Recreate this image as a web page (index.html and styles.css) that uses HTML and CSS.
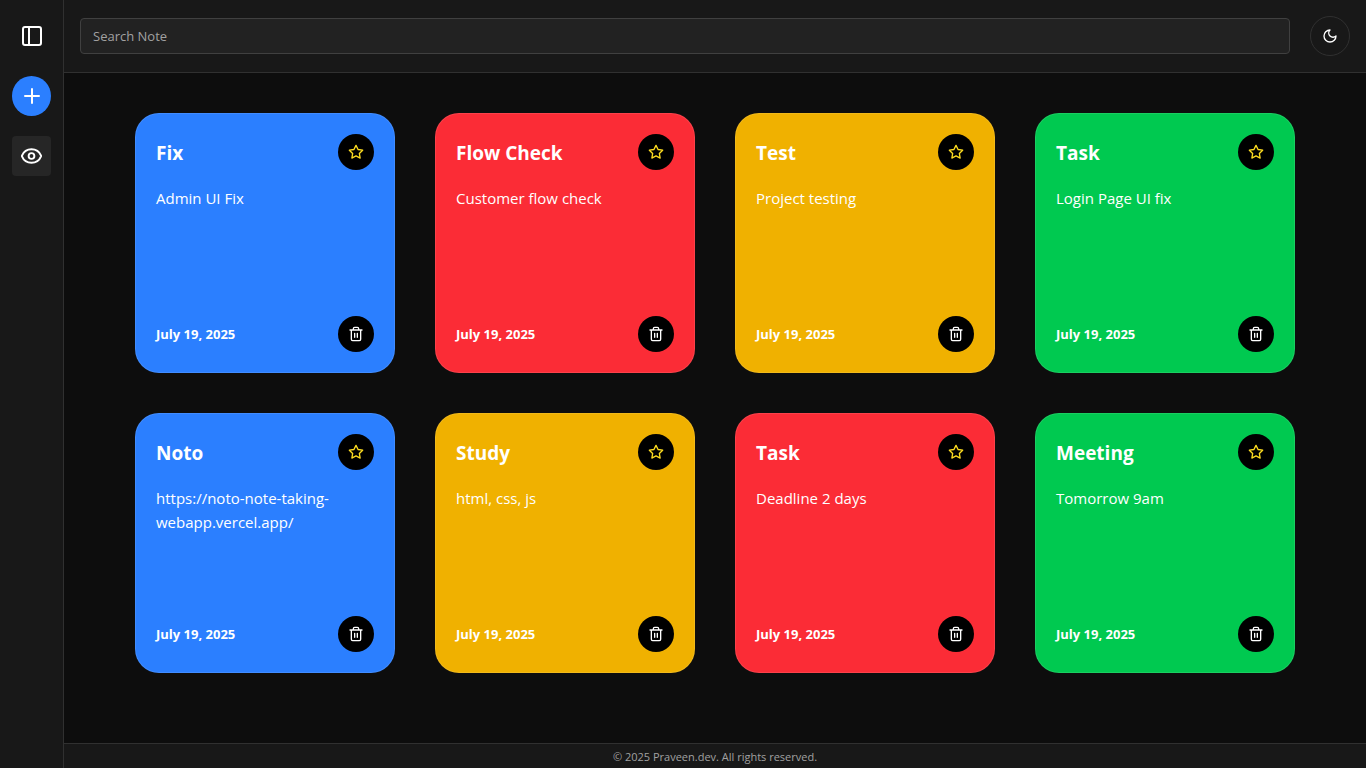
FILE: index.html
```html
<!DOCTYPE html>
<html lang="en">
<head>
<meta charset="utf-8">
<meta name="viewport" content="width=device-width, initial-scale=1">
<title>Noto</title>
<link rel="stylesheet" href="styles.css">
</head>
<body>
<svg class="sprite" aria-hidden="true">
  <symbol id="star" viewBox="0 0 24 24"><path d="M12 2l3.1 6.3 6.9 1-5 4.9 1.200 6.9-6.200-3.200-6.200 3.200 1.200-6.900-5-4.900 6.900-1z"/></symbol>
  <symbol id="trash" viewBox="0 0 24 24"><path d="M3 6h18M19 6v14a2 2 0 0 1-2 2H7a2 2 0 0 1-2-2V6M8 6V4a2 2 0 0 1 2-2h4a2 2 0 0 1 2 2v2M10 11v6M14 11v6"/></symbol>
</svg>
<div class="app">
  <aside class="sidebar">
    <button class="side-btn" type="button" aria-label="Toggle sidebar"><svg class="icon" viewBox="0 0 24 24"><rect x="3" y="3" width="18" height="18" rx="2"/><path d="M9 3v18"/></svg></button>
    <button class="side-btn side-btn-add" type="button" aria-label="Add note"><svg class="icon" viewBox="0 0 24 24"><path d="M5 12h14M12 5v14"/></svg></button>
    <button class="side-btn side-btn-view" type="button" aria-label="View notes"><svg class="icon icon-eye" viewBox="0 0 24 24"><path d="M2.060 12.350a1 1 0 0 1 0-.7 10.750 10.750 0 0 1 19.880 0 1 1 0 0 1 0 .7 10.750 10.750 0 0 1-19.880 0"/><circle cx="12" cy="12" r="3"/></svg></button>
  </aside>
  <div class="page">
    <header class="topbar">
      <input class="search" type="search" placeholder="Search Note" aria-label="Search Note">
      <button class="theme-btn" type="button" aria-label="Toggle theme"><svg class="icon icon-small" viewBox="0 0 24 24"><path d="M12 3a6 6 0 0 0 9 9 9 9 0 1 1-9-9z"/></svg></button>
    </header>
    <main class="notes">
      <article class="note blue">
        <div class="note-row"><h2 class="note-title">Fix</h2><button class="round-btn star" type="button" aria-label="Favourite"><svg class="icon icon-small"><use href="#star"/></svg></button></div>
        <p class="note-text">Admin UI Fix</p>
        <div class="note-row"><time class="note-date" datetime="2025-07-19">July 19, 2025</time><button class="round-btn" type="button" aria-label="Delete"><svg class="icon icon-small"><use href="#trash"/></svg></button></div>
      </article>
      <article class="note red">
        <div class="note-row"><h2 class="note-title">Flow Check</h2><button class="round-btn star" type="button" aria-label="Favourite"><svg class="icon icon-small"><use href="#star"/></svg></button></div>
        <p class="note-text">Customer flow check</p>
        <div class="note-row"><time class="note-date" datetime="2025-07-19">July 19, 2025</time><button class="round-btn" type="button" aria-label="Delete"><svg class="icon icon-small"><use href="#trash"/></svg></button></div>
      </article>
      <article class="note yellow">
        <div class="note-row"><h2 class="note-title">Test</h2><button class="round-btn star" type="button" aria-label="Favourite"><svg class="icon icon-small"><use href="#star"/></svg></button></div>
        <p class="note-text">Project testing</p>
        <div class="note-row"><time class="note-date" datetime="2025-07-19">July 19, 2025</time><button class="round-btn" type="button" aria-label="Delete"><svg class="icon icon-small"><use href="#trash"/></svg></button></div>
      </article>
      <article class="note green">
        <div class="note-row"><h2 class="note-title">Task</h2><button class="round-btn star" type="button" aria-label="Favourite"><svg class="icon icon-small"><use href="#star"/></svg></button></div>
        <p class="note-text">Login Page UI fix</p>
        <div class="note-row"><time class="note-date" datetime="2025-07-19">July 19, 2025</time><button class="round-btn" type="button" aria-label="Delete"><svg class="icon icon-small"><use href="#trash"/></svg></button></div>
      </article>
      <article class="note blue">
        <div class="note-row"><h2 class="note-title">Noto</h2><button class="round-btn star" type="button" aria-label="Favourite"><svg class="icon icon-small"><use href="#star"/></svg></button></div>
        <p class="note-text">https://noto-note-taking-webapp.vercel.app/</p>
        <div class="note-row"><time class="note-date" datetime="2025-07-19">July 19, 2025</time><button class="round-btn" type="button" aria-label="Delete"><svg class="icon icon-small"><use href="#trash"/></svg></button></div>
      </article>
      <article class="note yellow">
        <div class="note-row"><h2 class="note-title">Study</h2><button class="round-btn star" type="button" aria-label="Favourite"><svg class="icon icon-small"><use href="#star"/></svg></button></div>
        <p class="note-text">html, css, js</p>
        <div class="note-row"><time class="note-date" datetime="2025-07-19">July 19, 2025</time><button class="round-btn" type="button" aria-label="Delete"><svg class="icon icon-small"><use href="#trash"/></svg></button></div>
      </article>
      <article class="note red">
        <div class="note-row"><h2 class="note-title">Task</h2><button class="round-btn star" type="button" aria-label="Favourite"><svg class="icon icon-small"><use href="#star"/></svg></button></div>
        <p class="note-text">Deadline 2 days</p>
        <div class="note-row"><time class="note-date" datetime="2025-07-19">July 19, 2025</time><button class="round-btn" type="button" aria-label="Delete"><svg class="icon icon-small"><use href="#trash"/></svg></button></div>
      </article>
      <article class="note green">
        <div class="note-row"><h2 class="note-title">Meeting</h2><button class="round-btn star" type="button" aria-label="Favourite"><svg class="icon icon-small"><use href="#star"/></svg></button></div>
        <p class="note-text">Tomorrow 9am</p>
        <div class="note-row"><time class="note-date" datetime="2025-07-19">July 19, 2025</time><button class="round-btn" type="button" aria-label="Delete"><svg class="icon icon-small"><use href="#trash"/></svg></button></div>
      </article>
    </main>
    <footer class="footer">© 2025 Praveen.dev. All rights reserved.</footer>
  </div>
</div>
</body>
</html>
```
FILE: styles.css
```css
*, *::before, *::after { box-sizing: border-box; }

body {
  margin: 0;
  background: #0d0d0d;
  color: #fff;
  font-family: "Segoe UI", "Open Sans", "Noto Sans", sans-serif;
}

button {
  display: flex;
  align-items: center;
  justify-content: center;
  padding: 0;
  border: 0;
  background: none;
  color: #fff;
  cursor: pointer;
}

.sprite { display: none; }

.icon {
  width: 24px;
  height: 24px;
  fill: none;
  stroke: currentColor;
  stroke-width: 2;
  stroke-linecap: round;
  stroke-linejoin: round;
}
.icon-eye { width: 23px; }
.icon-small { width: 16px; height: 16px; }

.app { display: flex; min-height: 100vh; }

.sidebar {
  display: flex;
  flex-direction: column;
  flex: 0 0 64px;
  gap: 20px;
  padding: 16px 12px;
  background: #181818;
  border-right: 1px solid #303030;
}
.side-btn { height: 40px; border-radius: 4px; }
.side-btn-add { background: #2b7fff; border-radius: 50%; }
.side-btn-view { background: #262626; }

.page {
  display: flex;
  flex-direction: column;
  flex: 1;
  min-width: 0;
}

.topbar {
  display: flex;
  align-items: center;
  gap: 20px;
  padding: 16px;
  background: #181818;
  border-bottom: 1px solid #303030;
}
.search {
  flex: 1;
  min-width: 0;
  height: 36px;
  padding: 0 12px;
  border: 1px solid #404040;
  border-radius: 4px;
  background: #222;
  color: #fff;
  font: inherit;
  font-size: 13px;
}
.search::placeholder { color: #a1a1a1; opacity: 1; }
.theme-btn {
  width: 40px;
  height: 40px;
  border: 1px solid #303030;
  border-radius: 50%;
}

.notes {
  display: grid;
  grid-template-columns: repeat(auto-fill, 260px);
  justify-content: center;
  align-content: start;
  gap: 40px;
  flex: 1;
  padding: 40px;
}
.note {
  display: flex;
  flex-direction: column;
  min-height: 260px;
  padding: 20px;
  border: 1px solid rgb(255 255 255 / 10%);
  border-radius: 24px;
}
.blue { background-color: #2b7fff; }
.red { background-color: #fb2c36; }
.yellow { background-color: #f0b100; }
.green { background-color: #00c950; }

.note-row {
  display: flex;
  align-items: center;
  justify-content: space-between;
}
.note-title {
  margin: 0;
  padding-top: 2px;
  font-size: 19px;
  line-height: 28px;
  font-weight: 700;
}
.note-text {
  flex: 1;
  margin: 16px 0;
  font-size: 15px;
  line-height: 24px;
}
.note-date { font-size: 13px; line-height: 20px; font-weight: 700; }
.round-btn {
  width: 36px;
  height: 36px;
  border-radius: 50%;
  background: #000;
}
.star { color: #fddc20; }

.footer {
  padding: 5px 4px 3px;
  border-top: 1px solid #303030;
  background: #181818;
  color: #a1a1a1;
  font-size: 11px;
  line-height: 16px;
  text-align: center;
}
```
